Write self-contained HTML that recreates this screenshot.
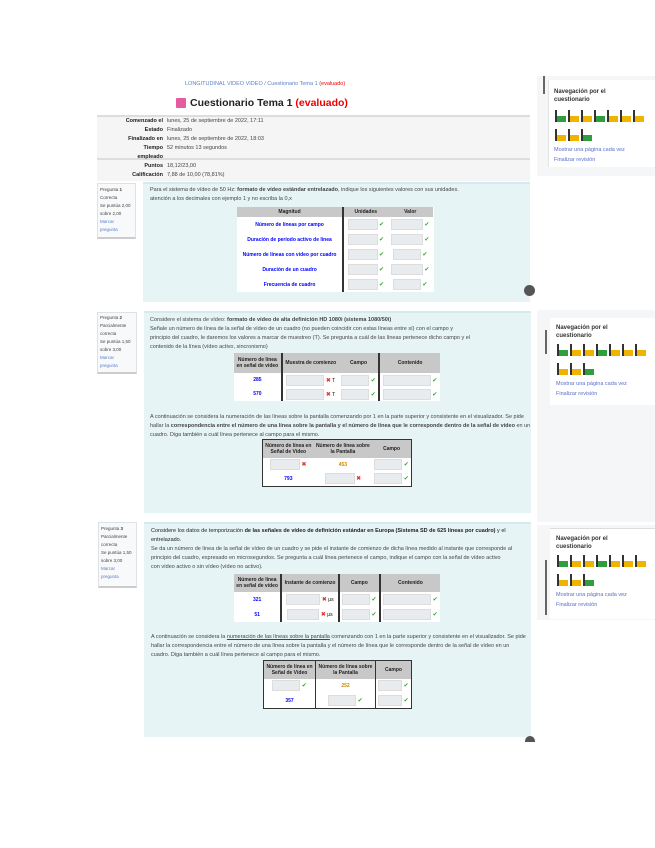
<!DOCTYPE html><html><head><meta charset="utf-8"><style>
body{margin:0;width:655px;height:848px;background:#fff;position:relative;font-family:"Liberation Sans",sans-serif;overflow:hidden}
.a{position:absolute}
.t{font-size:5.5px;color:#444;line-height:9px;white-space:nowrap}
.box{background:#e7f4f6;border-top:2px solid #d4eaef}
.info{background:#f8f9fa;border:1px solid #dee2e6;border-bottom:2px solid #ccc}
table{border-collapse:collapse;position:absolute;font-size:5px;background:#fff}
td,th{padding:0 2px;text-align:center;white-space:nowrap}
th{background:#c8c8c8;font-weight:bold;color:#222}
.inp{display:inline-block;background:#e9ecef;height:9px;vertical-align:middle;border:1px solid #ddd}
.ok{color:#3a3;font-size:6px}
.x{color:#d33;font-size:6px}
.b{color:#00f;font-weight:bold}
.nav{background:#fff}
.q{display:inline-block;width:9px;height:12px;margin:0 1px;border-left:2px solid #333;position:relative}
.q:after{content:"";position:absolute;left:0;bottom:0;width:9px;height:6px;background:#f0b400}
.g:after{background:#2e9e3e}
</style></head><body>
<div class="a t" style="left:185px;top:80px;color:#5b7fc8">LONGITUDINAL VIDEO VIDEO / Cuestionario Tema 1 <span style="color:#e00">(evaluado)</span></div>
<div class="a" style="left:176px;top:98px;width:10px;height:10px;background:#e55aa0;border-radius:1px"></div>
<div class="a" style="left:190px;top:97px;font-size:10.5px;font-weight:bold;color:#222">Cuestionario Tema 1 <span style="color:#e00">(evaluado)</span></div>
<div class="a" style="left:97px;top:115px;width:433px;height:64px;background:#f5f5f5;border-top:2px solid #ddd"></div>
<div class="a" style="left:97px;top:158px;width:433px;height:2px;background:#ddd"></div>
<div class="a t" style="left:97px;top:117px;width:66px;text-align:right;font-weight:bold;color:#222">Comenzado el<br>Estado<br>Finalizado en<br>Tiempo<br>empleado<br>Puntos<br>Calificación</div>
<div class="a t" style="left:167px;top:117px">lunes, 25 de septiembre de 2022, 17:11<br>Finalizado<br>lunes, 25 de septiembre de 2022, 18:03<br>52 minutos 13 segundos<br><br>18,12/23,00<br>7,88 de 10,00 (78,81%)</div>
<!-- Q1 -->
<div class="a info" style="left:97px;top:183px;width:37px;height:53px"></div>
<div class="a t" style="left:100px;top:186px;font-size:4.5px;line-height:8px">Pregunta <b>1</b><br>Correcta<br>Se puntúa 2,00<br>sobre 2,00<br><span style="color:#5b7fc8">Marcar<br>pregunta</span></div>
<div class="a box" style="left:143px;top:182px;width:387px;height:118px"></div>
<div class="a t" style="left:150px;top:186px">Para el sistema de vídeo de 50 Hz: <b>formato de vídeo estándar entrelazado</b>, indique los siguientes valores con sus unidades.<br>atención a los decimales con ejemplo 1 y no escriba la 0,x</div>
<table style="left:237px;top:207px;width:197px;height:85px">
<tr style="height:10px"><th style="border-right:2px solid #333">Magnitud</th><th>Unidades</th><th>Valor</th></tr>
<tr><td class="b" style="border-right:2px solid #333">Número de líneas por campo</td><td><span class="inp" style="width:28px"></span> <span class="ok">✔</span></td><td><span class="inp" style="width:30px"></span> <span class="ok">✔</span></td></tr>
<tr><td class="b" style="border-right:2px solid #333">Duración de periodo activo de línea</td><td><span class="inp" style="width:28px"></span> <span class="ok">✔</span></td><td><span class="inp" style="width:30px"></span> <span class="ok">✔</span></td></tr>
<tr><td class="b" style="border-right:2px solid #333">Número de líneas con vídeo por cuadro</td><td><span class="inp" style="width:28px"></span> <span class="ok">✔</span></td><td><span class="inp" style="width:26px"></span> <span class="ok">✔</span></td></tr>
<tr><td class="b" style="border-right:2px solid #333">Duración de un cuadro</td><td><span class="inp" style="width:28px"></span> <span class="ok">✔</span></td><td><span class="inp" style="width:30px"></span> <span class="ok">✔</span></td></tr>
<tr><td class="b" style="border-right:2px solid #333">Frecuencia de cuadro</td><td><span class="inp" style="width:28px"></span> <span class="ok">✔</span></td><td><span class="inp" style="width:26px"></span> <span class="ok">✔</span></td></tr>
</table>
<div class="a" style="left:524px;top:285px;width:11px;height:11px;border-radius:50%;background:#555"></div>
<!-- Q2 -->
<div class="a info" style="left:97px;top:312px;width:38px;height:59px"></div>
<div class="a t" style="left:100px;top:314px;font-size:4.5px;line-height:8px">Pregunta <b>2</b><br>Parcialmente<br>correcta<br>Se puntúa 1,50<br>sobre 3,00<br><span style="color:#5b7fc8">Marcar<br>pregunta</span></div>
<div class="a box" style="left:144px;top:311px;width:387px;height:200px"></div>
<div class="a t" style="left:150px;top:316px">Considere el sistema de vídeo: <b>formato de vídeo de alta definición HD 1080i (sistema 1080/50i)</b><br>Señale un número de línea de la señal de vídeo de un cuadro (no pueden coincidir con estas líneas entre sí) con el campo y<br>principio del cuadro, le daremos los valores a marcar de muestreo (T). Se pregunta a cuál de las líneas pertenece dicho campo y el<br>contenido de la línea (vídeo activo, sincronismo)</div>
<table style="left:234px;top:353px;width:206px;height:48px">
<tr style="height:20px"><th style="border-right:2px solid #333">Número de línea<br>en señal de vídeo</th><th>Muestra de comienzo</th><th style="border-right:2px solid #333">Campo</th><th>Contenido</th></tr>
<tr><td class="b" style="border-right:2px solid #333">285</td><td><span class="inp" style="width:36px"></span> <span class="x">✖</span> T</td><td style="border-right:2px solid #333"><span class="inp" style="width:26px"></span> <span class="ok">✔</span></td><td><span class="inp" style="width:46px"></span> <span class="ok">✔</span></td></tr>
<tr><td class="b" style="border-right:2px solid #333">570</td><td><span class="inp" style="width:36px"></span> <span class="x">✖</span> T</td><td style="border-right:2px solid #333"><span class="inp" style="width:26px"></span> <span class="ok">✔</span></td><td><span class="inp" style="width:46px"></span> <span class="ok">✔</span></td></tr>
</table>
<div class="a t" style="left:150px;top:413px">A continuación se considera la numeración de las líneas sobre la pantalla comenzando por 1 en la parte superior y consistente en el visualizador. Se pide<br>hallar la <b>correspondencia entre el número de una línea sobre la pantalla y el número de línea que le corresponde dentro de la señal de vídeo</b> en un<br>cuadro. Diga también a cuál línea pertenece al campo para el mismo.</div>
<table style="left:262px;top:439px;width:150px;height:48px;border:1px solid #333">
<tr style="height:18px"><th>Número de línea en<br>Señal de Vídeo</th><th>Número de línea sobre<br>la Pantalla</th><th>Campo</th></tr>
<tr><td><span class="inp" style="width:28px"></span> <span class="x">✖</span></td><td style="color:#c80;font-weight:bold">453</td><td><span class="inp" style="width:26px"></span> <span class="ok">✔</span></td></tr>
<tr><td class="b">793</td><td><span class="inp" style="width:28px"></span> <span class="x">✖</span></td><td><span class="inp" style="width:26px"></span> <span class="ok">✔</span></td></tr>
</table>
<!-- Q3 -->
<div class="a info" style="left:98px;top:522px;width:37px;height:63px"></div>
<div class="a t" style="left:101px;top:525px;font-size:4.5px;line-height:8px">Pregunta <b>3</b><br>Parcialmente<br>correcta<br>Se puntúa 1,50<br>sobre 3,00<br><span style="color:#5b7fc8">Marcar<br>pregunta</span></div>
<div class="a box" style="left:144px;top:522px;width:387px;height:213px"></div>
<div class="a t" style="left:151px;top:527px;color:#222">Considere los datos de temporización <b>de las señales de vídeo de definición estándar en Europa (Sistema SD de 625 líneas por cuadro)</b> y el<br>entrelazado.</div>
<div class="a t" style="left:151px;top:545px">Se da un número de línea de la señal de vídeo de un cuadro y se pide el instante de comienzo de dicha línea medido al instante que corresponde al<br>principio del cuadro, expresado en microsegundos. Se pregunta a cuál línea pertenece el campo, indique el campo con la señal de vídeo activo<br>con vídeo activo o sin vídeo (vídeo no activo).</div>
<table style="left:234px;top:574px;width:206px;height:48px">
<tr style="height:18px"><th style="border-right:2px solid #333">Número de línea<br>en señal de vídeo</th><th style="border-right:2px solid #333">Instante de comienzo</th><th style="border-right:2px solid #333">Campo</th><th>Contenido</th></tr>
<tr><td class="b" style="border-right:2px solid #333">321</td><td style="border-right:2px solid #333"><span class="inp" style="width:32px"></span> <span class="x">✖</span> μs</td><td style="border-right:2px solid #333"><span class="inp" style="width:26px"></span> <span class="ok">✔</span></td><td><span class="inp" style="width:46px"></span> <span class="ok">✔</span></td></tr>
<tr><td class="b" style="border-right:2px solid #333">51</td><td style="border-right:2px solid #333"><span class="inp" style="width:30px"></span> <span class="x">✖</span> μs</td><td style="border-right:2px solid #333"><span class="inp" style="width:26px"></span> <span class="ok">✔</span></td><td><span class="inp" style="width:46px"></span> <span class="ok">✔</span></td></tr>
</table>
<div class="a t" style="left:151px;top:633px">A continuación se considera la <u>numeración de las líneas sobre la pantalla</u> comenzando con 1 en la parte superior y consistente en el visualizador. Se pide<br>hallar la correspondencia entre el número de una línea sobre la pantalla y el número de línea que le corresponde dentro de la señal de vídeo en un<br>cuadro. Diga también a cuál línea pertenece al campo para el mismo.</div>
<table style="left:263px;top:660px;width:149px;height:49px;border:1px solid #333">
<tr style="height:18px"><th style="border-right:1px solid #333">Número de línea en<br>Señal de Vídeo</th><th style="border-right:1px solid #333">Número de línea sobre<br>la Pantalla</th><th>Campo</th></tr>
<tr><td style="border-right:1px solid #333"><span class="inp" style="width:26px"></span> <span class="ok">✔</span></td><td style="color:#c80;font-weight:bold;border-right:1px solid #333">252</td><td><span class="inp" style="width:22px"></span> <span class="ok">✔</span></td></tr>
<tr><td class="b" style="border-right:1px solid #333">357</td><td style="border-right:1px solid #333"><span class="inp" style="width:26px"></span> <span class="ok">✔</span></td><td><span class="inp" style="width:22px"></span> <span class="ok">✔</span></td></tr>
</table>
<div class="a" style="left:525px;top:736px;width:10px;height:6px;border-radius:5px 5px 0 0;background:#555"></div>
<!-- sidebar -->
<div class="a" style="left:537px;top:76px;width:118px;height:100px;background:#f5f6f8"></div>
<div class="a" style="left:543px;top:76px;width:2px;height:18px;background:#666"></div>
<div class="a nav" style="left:548px;top:80px;width:107px;height:87px;border-left:1px solid #e3e3e3"></div>
<div class="a t" style="left:554px;top:88px;font-size:6px;line-height:8px;color:#333;font-weight:bold">Navegación por el<br>cuestionario</div>
<div class="a" style="left:554px;top:110px;width:100px;line-height:14px;font-size:0"><i class="q g"></i><i class="q"></i><i class="q"></i><i class="q g"></i><i class="q"></i><i class="q"></i><i class="q"></i><br><i class="q"></i><i class="q"></i><i class="q g"></i></div>
<div class="a t" style="left:554px;top:145px;color:#5b6fc8;line-height:10px">Mostrar una página cada vez<br>Finalizar revisión</div>
<div class="a" style="left:537px;top:310px;width:118px;height:212px;background:#f5f6f8"></div>
<div class="a" style="left:545px;top:330px;width:2px;height:24px;background:#666"></div>
<div class="a nav" style="left:550px;top:318px;width:105px;height:87px"></div>
<div class="a t" style="left:556px;top:324px;font-size:6px;line-height:8px;color:#333;font-weight:bold">Navegación por el<br>cuestionario</div>
<div class="a" style="left:556px;top:344px;width:100px;line-height:14px;font-size:0"><i class="q g"></i><i class="q"></i><i class="q"></i><i class="q g"></i><i class="q"></i><i class="q"></i><i class="q"></i><br><i class="q"></i><i class="q"></i><i class="q g"></i></div>
<div class="a t" style="left:556px;top:379px;color:#5b6fc8;line-height:10px">Mostrar una página cada vez<br>Finalizar revisión</div>
<div class="a" style="left:537px;top:525px;width:118px;height:95px;background:#f5f6f8"></div>
<div class="a" style="left:545px;top:560px;width:2px;height:55px;background:#666"></div>
<div class="a nav" style="left:550px;top:528px;width:105px;height:90px;border-top:1px solid #ddd"></div>
<div class="a t" style="left:556px;top:535px;font-size:6px;line-height:8px;color:#333;font-weight:bold">Navegación por el<br>cuestionario</div>
<div class="a" style="left:556px;top:555px;width:100px;line-height:14px;font-size:0"><i class="q g"></i><i class="q"></i><i class="q"></i><i class="q g"></i><i class="q"></i><i class="q"></i><i class="q"></i><br><i class="q"></i><i class="q"></i><i class="q g"></i></div>
<div class="a t" style="left:556px;top:590px;color:#5b6fc8;line-height:10px">Mostrar una página cada vez<br>Finalizar revisión</div>
</body></html>
